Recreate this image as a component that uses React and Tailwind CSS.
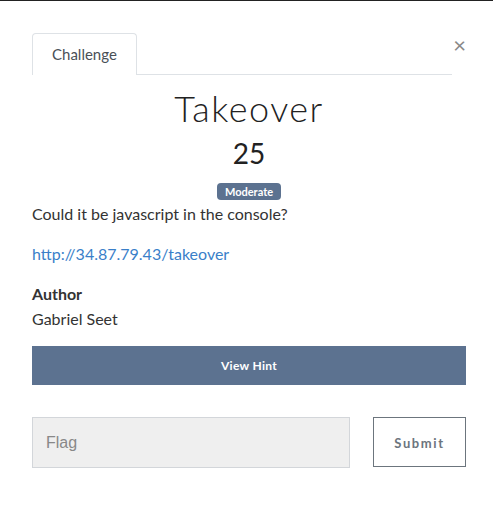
export default function App() {
  return (
    <div className="w-[493px] h-[516px] bg-white border-t border-[#222] relative" style={{ fontFamily: 'Lato, "Open Sans", sans-serif' }}>
      <div className="pl-[32px] pr-[27px] pt-[32px]">
        <div className="flex items-start">
          <div className="flex border-b border-[#dee2e6] w-[420px]">
            <div className="h-[42px] px-[19px] flex items-center border border-b-0 border-[#dee2e6] rounded-t-[4px] text-[15px] text-[#495057] -mb-px bg-white">Challenge</div>
          </div>
          <button className="ml-[1px] w-[14px] mt-[1px] text-[#888] text-[22px] leading-none flex-1 text-right">×</button>
        </div>
        <div className="w-[434px]">
          <h1 className="text-center text-[36px] font-light tracking-[1.5px] text-[#222] leading-none mt-[15px]">Takeover</h1>
          <div className="text-center text-[28px] text-[#222] leading-none mt-[13px]">25</div>
          <div className="flex justify-center mt-[16px]">
            <span className="bg-[#5c7290] text-white text-[11px] font-bold rounded-[4px] px-[8px] h-[17px] flex items-center leading-none">Moderate</span>
          </div>
          <p className="text-[16px] text-[#333] leading-[24px] mt-[2px]">Could it be javascript in the console?</p>
          <p className="text-[16px] text-[#3a7fc9] leading-[24px] mt-[16px]">http://34.87.79.43/takeover</p>
          <p className="text-[16px] text-[#333] font-bold leading-[24px] mt-[16px]">Author</p>
          <p className="text-[16px] text-[#333] leading-[24px] mt-[1px]">Gabriel Seet</p>
          <button className="mt-[15px] w-full h-[39px] bg-[#5c7290] text-white text-[12px] font-bold tracking-[0.3px]">View Hint</button>
          <div className="flex mt-[32px] justify-between">
            <div className="w-[318px] h-[51px] bg-[#efefef] border border-[#d3d6da] flex items-center px-[13px] text-[16px] text-[#888]" style={{ fontFamily: '"Liberation Sans", Arial, sans-serif' }}>Flag</div>
            <button className="w-[93px] h-[50px] pt-[3px] border border-[#6c757d] text-[13px] font-bold tracking-[1.6px] text-[#6c757d]">Submit</button>
          </div>
        </div>
      </div>
    </div>
  );
}
